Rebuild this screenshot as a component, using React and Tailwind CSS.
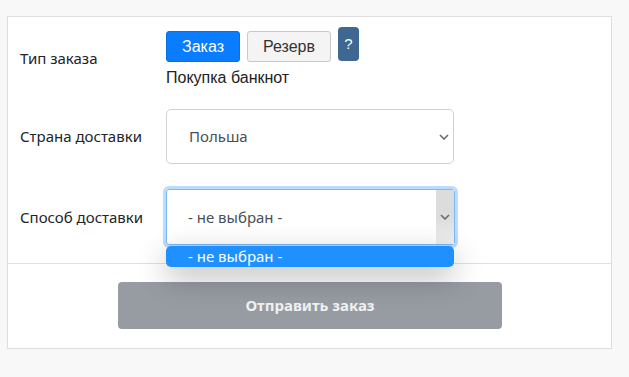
export default function App() {
  const label = "w-[158px] pl-[12px] text-[15px] text-[#212529]";
  const chevron = (
    <svg width="10" height="6" viewBox="0 0 10 6" className="block">
      <path d="M1 1 L5 5 L9 1" fill="none" stroke="#6b6b6b" strokeWidth="1.6" />
    </svg>
  );
  return (
    <div className="min-h-[377px] w-[629px] bg-[#f8f8f8] pt-[16px] pl-[7px]" style={{ fontFamily: '"Noto Sans", "Open Sans", sans-serif' }}>
      <div className="w-[605px] border border-[#dedede] bg-white">
        <div className="pt-[10px] pb-[18px]">
          {/* Row 1 */}
          <div className="flex">
            <div className={`${label} self-center pt-[2px]`}>Тип заказа</div>
            <div className="flex flex-col" style={{ fontFamily: '"Liberation Sans", Arial, sans-serif' }}>
              <div className="flex items-start gap-[7px]">
                <button className="mt-[4px] h-[31px] w-[74px] rounded-[3px] border border-[#0a6fe0] bg-[#0a7cff] text-[16px] text-white">Заказ</button>
                <button className="mt-[4px] h-[31px] w-[84px] rounded-[3px] border border-[#c9c9c9] bg-[#f4f4f4] text-[16px] text-[#333]">Резерв</button>
                <button className="h-[34px] w-[21px] rounded-[4px] bg-[#3e6792] text-[15px] text-white">?</button>
              </div>
              <div className="mt-[6px] text-[16px] leading-[20px] text-[#222]">Покупка банкнот</div>
            </div>
          </div>
          {/* Row 2 */}
          <div className="mt-[21px] flex items-center">
            <div className={label}>Страна доставки</div>
            <div className="flex h-[55px] w-[288px] items-center justify-between rounded-[5px] border border-[#cfd3d8] pl-[22px] pr-[4px] text-[15px] text-[#495057]">
              <span>Польша</span>
              {chevron}
            </div>
          </div>
          {/* Row 3 */}
          <div className="mt-[25px] flex items-center">
            <div className={label}>Способ доставки</div>
            <div className="relative">
              <div className="flex h-[56px] w-[289px] items-stretch justify-between rounded-[3px] border border-[#7db8f5] text-[15px] text-[#495057] shadow-[0_0_0_3px_#bcdcfd]">
                <span className="self-center pl-[21px]">- не выбран -</span>
                <div className="flex w-[18px] items-center justify-center bg-gradient-to-b from-[#dcdcdc] via-[#dcdcdc] to-[#f0f0f0]">{chevron}</div>
              </div>
              <div className="absolute left-0 top-[57px] z-10 flex h-[21px] w-[288px] items-center rounded-[5px] bg-[#1e90ff] pl-[22px] text-[15px] text-white shadow-[0_10px_30px_rgba(0,0,0,0.3)]">
                - не выбран -
              </div>
            </div>
          </div>
        </div>
        <div className="flex justify-center border-t border-[#e0e0e0] pt-[18px] pb-[19px]">
          <button className="ml-[1px] h-[47px] w-[384px] rounded-[4px] bg-[#979ca3] text-[15px] font-bold text-[#f1f1f1]">Отправить заказ</button>
        </div>
      </div>
    </div>
  );
}
